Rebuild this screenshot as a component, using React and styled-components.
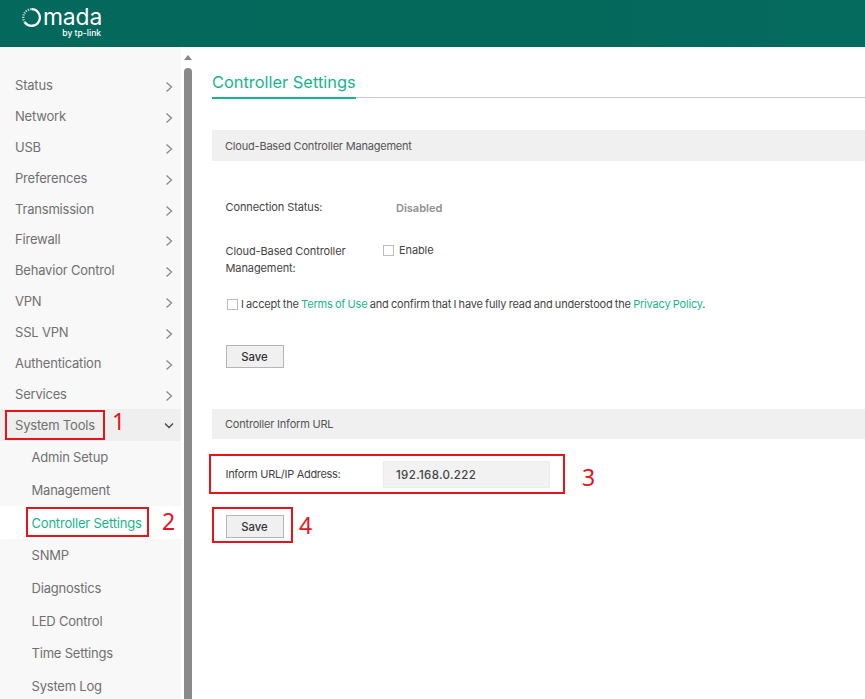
import React from 'react';
import styled, { createGlobalStyle } from 'styled-components';

const GlobalStyle = createGlobalStyle`
  html, body {
    margin: 0;
    height: 100%;
    overflow: hidden;
    background: #fff;
    font-family: Inter, "Noto Sans", "Liberation Sans", sans-serif;
  }
`;

const Page = styled.div`
  position: relative;
  width: 865px;
  height: 699px;
  overflow: hidden;
  display: flex;
  flex-direction: column;
`;

const Header = styled.header`
  height: 47px;
  flex-shrink: 0;
  background: linear-gradient(90deg, #04695c 0%, #04685b 60%, #056b5e 100%);
  display: flex;
  align-items: flex-start;
  padding-left: 21px;
`;

const Logo = styled.div`
  display: flex;
  flex-direction: column;
  align-items: flex-end;
  color: #fff;
  padding-top: 5px;
`;

const LogoWord = styled.div`
  display: flex;
  align-items: center;
  gap: 1px;
  font-size: 22.8px;
  font-weight: 400;
  line-height: 24px;
  letter-spacing: -0.1px;
`;

const LogoBy = styled.div`
  font-size: 8.6px;
  font-weight: 500;
  line-height: 8px;
  margin-right: 1px;
`;

const Body = styled.div`
  flex: 1;
  display: flex;
  min-height: 0;
`;

const Sidebar = styled.nav`
  width: 181px;
  flex-shrink: 0;
  background: #f8f8f8;
  padding-top: 22.5px;
`;

const MenuRow = styled.div`
  height: ${(p) => (p.$open ? '31.5px' : '30.9px')};
  display: flex;
  align-items: center;
  justify-content: space-between;
  padding: 0 7px 0 15px;
  font-size: 13px;
  letter-spacing: -0.2px;
  color: #707070;
  background: ${(p) => (p.$open ? '#efefef' : 'transparent')};
`;

const SubRow = styled.div`
  height: 32.7px;
  display: flex;
  align-items: center;
  padding-left: 31.5px;
  font-size: 13px;
  letter-spacing: -0.2px;
  color: ${(p) => (p.$active ? '#17b58c' : '#707070')};
  background: ${(p) => (p.$active ? '#fff' : 'transparent')};
`;

const Chevron = styled.svg`
  width: 10px;
  height: 12px;
  margin-top: ${(p) => (p.$open ? '1px' : '4px')};
  fill: none;
  stroke: ${(p) => (p.$open ? '#444' : '#8a8a8a')};
  stroke-width: 1.3;
`;

const ScrollTrack = styled.div`
  width: 11px;
  flex-shrink: 0;
  background: #fff;
  display: flex;
  flex-direction: column;
  align-items: flex-end;
`;

const ScrollArrow = styled.div`
  width: 0;
  height: 0;
  margin: 8px 0 0 3px;
  align-self: center;
  border-left: 4px solid transparent;
  border-right: 4px solid transparent;
  border-bottom: 5px solid #888;
`;

const ScrollThumb = styled.div`
  flex: 1;
  width: 8px;
  margin-top: 8px;
  border-radius: 4px 4px 0 0;
  background: #8a8a8a;
`;

const Main = styled.main`
  flex: 1;
  min-width: 0;
  padding: 19px 0 0 20px;
`;

const TitleBar = styled.div`
  border-bottom: 1px solid #c8c8c8;
  height: 31px;
`;

const Title = styled.h1`
  display: inline-block;
  margin: 0 0 -1px;
  height: 31px;
  box-sizing: content-box;
  border-bottom: 2px solid #17b58c;
  font-size: 16.4px;
  font-weight: 400;
  line-height: 32px;
  color: #17b58c;
`;

const SectionBar = styled.div`
  box-sizing: border-box;
  height: 30.5px;
  margin-top: ${(p) => p.$top}px;
  padding: 1px 0 0 13px;
  display: flex;
  align-items: center;
  background: #f0f0f0;
  font-size: 11px;
  letter-spacing: -0.2px;
  color: #555;
`;

const FormBody = styled.div`
  padding-left: 13.5px;
  font-size: 11px;
  letter-spacing: -0.1px;
  color: #444;
`;

const StatusRow = styled.div`
  display: flex;
  align-items: center;
  height: 20px;
  margin-top: ${(p) => p.$top}px;
`;

const Label = styled.div`
  width: 157.5px;
  flex-shrink: 0;
  line-height: 17.5px;
  letter-spacing: ${(p) => (p.$tight ? '-0.3px' : 'inherit')};
  margin-top: ${(p) => (p.$tight ? '2px' : '0')};
`;

const DisabledValue = styled.div`
  padding-left: 13px;
  font-size: 11px;
  font-weight: 600;
  letter-spacing: 0;
  color: #8f8f8f;
`;

const EnableRow = styled.div`
  display: flex;
  align-items: flex-start;
  margin-top: 24px;
  height: 35px;
`;

const FieldLabel = styled(Label)`
  margin-top: 1px;
`;

const CheckLabel = styled.label`
  display: flex;
  align-items: center;
  gap: 5px;
  height: 17px;
`;

const CheckBox = styled.span`
  display: inline-block;
  box-sizing: border-box;
  width: 11px;
  height: 11px;
  flex-shrink: 0;
  background: #fff;
  border: 1px solid #bdbdbd;
`;

const AcceptRow = styled.div`
  display: flex;
  align-items: center;
  gap: 3px;
  height: 17px;
  margin: 19px 0 0 1.5px;
  white-space: nowrap;
  letter-spacing: -0.18px;
  word-spacing: -0.6px;
`;

const TextLink = styled.span`
  color: #17b58c;
`;

const SaveButton = styled.button`
  display: block;
  box-sizing: border-box;
  width: 58px;
  height: 23px;
  margin-top: ${(p) => p.$top}px;
  padding: 1px 0 0;
  background: #f0f0f0;
  border: 1px solid #b5b5b5;
  font: 500 11.3px Inter, sans-serif;
  color: #333;
`;

const InformRow = styled.div`
  display: flex;
  align-items: center;
  margin-top: 21.5px;
`;

const InformInput = styled.div`
  box-sizing: border-box;
  width: 167px;
  height: 27px;
  padding: 1px 0 0 12px;
  display: flex;
  align-items: center;
  background: #f2f2f2;
  border: 1px solid #ececec;
  font-size: 11.5px;
  font-weight: 500;
  letter-spacing: 0.35px;
  color: #444;
`;

// annotations pasted over the screenshot
const RedBox = styled.div`
  position: absolute;
  box-sizing: border-box;
  left: ${(p) => p.$x}px;
  top: ${(p) => p.$y}px;
  width: ${(p) => p.$w}px;
  height: ${(p) => p.$h}px;
  border: 2px solid #e8141c;
`;

const RedNumber = styled.div`
  position: absolute;
  left: ${(p) => p.$x}px;
  top: ${(p) => p.$y}px;
  font: 400 23px/24px "Noto Sans", sans-serif;
  color: #e8141c;
`;

const menuItems = [
  'Status', 'Network', 'USB', 'Preferences', 'Transmission', 'Firewall',
  'Behavior Control', 'VPN', 'SSL VPN', 'Authentication', 'Services',
];

const subItems = [
  'Admin Setup', 'Management', 'Controller Settings', 'SNMP',
  'Diagnostics', 'LED Control', 'Time Settings', 'System Log',
];

const LogoRing = () => (
  <svg width="21" height="21" viewBox="0 0 21 21" fill="none" stroke="#fff">
    <path d="M10.5 2.2a8.3 8.3 0 1 1-6.6 13.3" strokeWidth="2.3" />
    <path d="M3.9 15.5A8.3 8.3 0 0 1 10.5 2.2" strokeWidth="2.3" strokeDasharray="1.2 1.2" opacity="0.75" />
  </svg>
);

const App = () => (
  <Page>
    <GlobalStyle />
    <Header>
      <Logo>
        <LogoWord>
          <LogoRing />
          mada
        </LogoWord>
        <LogoBy>by tp-link</LogoBy>
      </Logo>
    </Header>
    <Body>
      <Sidebar>
        {menuItems.map((item) => (
          <MenuRow key={item}>
            {item}
            <Chevron viewBox="0 0 10 12"><path d="M2.5 1.5 7.5 6l-5 4.5" /></Chevron>
          </MenuRow>
        ))}
        <MenuRow $open>
          System Tools
          <Chevron $open viewBox="0 0 10 12"><path d="M1 3.5 5 7.5l4-4" /></Chevron>
        </MenuRow>
        {subItems.map((item) => (
          <SubRow key={item} $active={item === 'Controller Settings'}>{item}</SubRow>
        ))}
      </Sidebar>
      <ScrollTrack>
        <ScrollArrow />
        <ScrollThumb />
      </ScrollTrack>
      <Main>
        <TitleBar>
          <Title>Controller Settings</Title>
        </TitleBar>
        <SectionBar $top={32}>Cloud-Based Controller Management</SectionBar>
        <FormBody>
          <StatusRow $top={37}>
            <Label>Connection Status:</Label>
            <DisabledValue>Disabled</DisabledValue>
          </StatusRow>
          <EnableRow>
            <FieldLabel>Cloud-Based Controller<br />Management:</FieldLabel>
            <CheckLabel><CheckBox />Enable</CheckLabel>
          </EnableRow>
          <AcceptRow>
            <CheckBox />
            <span>
              I accept the <TextLink>Terms of Use</TextLink> and confirm that I have fully read and understood the <TextLink>Privacy Policy</TextLink>.
            </span>
          </AcceptRow>
          <SaveButton $top={32}>Save</SaveButton>
        </FormBody>
        <SectionBar $top={41}>Controller Inform URL</SectionBar>
        <FormBody>
          <InformRow>
            <Label $tight>Inform URL/IP Address:</Label>
            <InformInput>192.168.0.222</InformInput>
          </InformRow>
          <SaveButton $top={27}>Save</SaveButton>
        </FormBody>
      </Main>
    </Body>
    <RedBox $x={5} $y={410} $w={100} $h={30} />
    <RedNumber $x={112} $y={409}>1</RedNumber>
    <RedBox $x={26} $y={507} $w={123} $h={30} />
    <RedNumber $x={162} $y={509}>2</RedNumber>
    <RedBox $x={209} $y={454} $w={356} $h={40} />
    <RedNumber $x={582} $y={465}>3</RedNumber>
    <RedBox $x={212} $y={507} $w={81} $h={36} />
    <RedNumber $x={299} $y={513}>4</RedNumber>
  </Page>
);

export default App;
